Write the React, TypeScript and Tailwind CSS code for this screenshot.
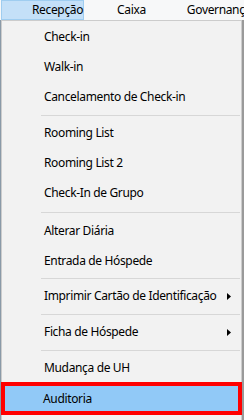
import { Fragment } from "react"

type Entry = { label?: string; sub?: boolean; sep?: boolean; sepH?: string; active?: boolean }

const items: Entry[] = [
  { label: "Check-in" },
  { label: "Walk-in" },
  { label: "Cancelamento de Check-in" },
  { sep: true, sepH: "h-[6px]" },
  { label: "Rooming List" },
  { label: "Rooming List 2" },
  { label: "Check-In de Grupo" },
  { sep: true, sepH: "h-[8px]" },
  { label: "Alterar Diária" },
  { label: "Entrada de Hóspede" },
  { sep: true, sepH: "h-[5px]" },
  { label: "Imprimir Cartão de Identificação", sub: true },
  { sep: true, sepH: "h-[6px]" },
  { label: "Ficha de Hóspede", sub: true },
  { sep: true, sepH: "h-[6px]" },
  { label: "Mudança de UH" },
  { label: "Auditoria", active: true },
]

const Arrow = () => (
  <svg width="4" height="7" viewBox="0 0 4 7" className="mr-[10px] shrink-0">
    <path d="M0 0 L4 3.5 L0 7 Z" fill="#000" />
  </svg>
)

export default function App() {
  return (
    <div className="w-[244px] h-[420px] overflow-hidden bg-[#f0f0f0] text-[12px] tracking-[-0.35px] text-black font-['Noto_Sans','Open_Sans',sans-serif] whitespace-nowrap">
      {/* menu bar */}
      <div className="h-[20px] flex items-stretch bg-[#f7f8f9]">
        <div className="ml-[1px] w-[89px] flex items-center pl-[30px] bg-[#c4e0f8] border border-[#9fcdf0]">
          Recepção
        </div>
        <div className="flex items-center pl-[33px]">Caixa</div>
        <div className="flex items-center pl-[41px]">Governança</div>
      </div>

      <div className="flex h-[400px]">
        <div className="w-[1px] bg-[#8a9aa8]" />
        {/* dropdown */}
        <div className="w-[241px] h-[400px] border border-[#cccccc] border-b-0 bg-[#f2f2f2] pt-[1px] flex flex-col">
          {items.map((it, i) =>
            it.sep ? (
              <div key={i} className={`${it.sepH} flex items-center pl-[39px] pr-[1px]`}>
                <div className="h-[1px] w-full bg-[#d7d7d7]" />
              </div>
            ) : (
              <Fragment key={i}>
                {it.active ? (
                  <div className="h-[33px] -mx-[1px] border-[4px] border-[#ff0000] bg-[#91c9f7] flex items-center pl-[38px] mt-[-1px]">
                    {it.label}
                  </div>
                ) : (
                  <div className="h-[30px] flex items-center justify-between pl-[42px]">
                    <span>{it.label}</span>
                    {it.sub && <Arrow />}
                  </div>
                )}
              </Fragment>
            )
          )}
        </div>
        <div className="w-[2px] bg-[#9a9a9a]" />
      </div>
    </div>
  )
}
